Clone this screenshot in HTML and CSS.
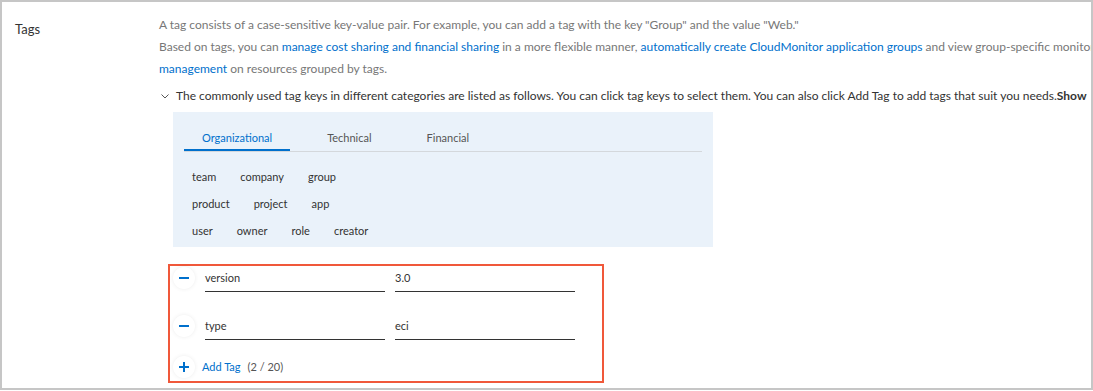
FILE: index.html
```html
<!DOCTYPE html>
<html lang="en">
<head>
    <meta charset="UTF-8">
    <title>Tags</title>
    <link rel="stylesheet" href="styles.css">
</head>
<body>
    <div class="frame">
        <div class="form-row">
            <div class="form-label">Tags</div>
            <div class="form-content">
                <p class="desc">A tag consists of a case-sensitive key-value pair. For example, you can add a tag with the key "Group" and the value "Web."</p>
                <p class="desc">Based on tags, you can <a href="#">manage cost sharing and financial sharing</a> in a more flexible manner, <a href="#">automatically create CloudMonitor application groups</a> and view group-specific monitoring</p>
                <p class="desc"><a href="#">management</a> on resources grouped by tags.</p>

                <div class="toggle">
                    <svg class="chevron" width="8" height="5" viewBox="0 0 8 5"><path d="M0.5 0.5 L4 4 L7.5 0.5" fill="none" stroke="#555" stroke-width="1"/></svg>
                    <span>The commonly used tag keys in different categories are listed as follows. You can click tag keys to select them. You can also click Add Tag to add tags that suit you needs.<b>Show</b></span>
                </div>

                <div class="preset-panel">
                    <div class="tabs">
                        <div class="tab active">Organizational</div>
                        <div class="tab">Technical</div>
                        <div class="tab">Financial</div>
                    </div>
                    <div class="key-row">
                        <span class="key">team</span>
                        <span class="key">company</span>
                        <span class="key">group</span>
                    </div>
                    <div class="key-row">
                        <span class="key">product</span>
                        <span class="key">project</span>
                        <span class="key">app</span>
                    </div>
                    <div class="key-row">
                        <span class="key">user</span>
                        <span class="key">owner</span>
                        <span class="key">role</span>
                        <span class="key">creator</span>
                    </div>
                </div>

                <div class="tag-editor">
                    <div class="tag-line">
                        <span class="round-btn minus"></span>
                        <div class="field">version</div>
                        <div class="field">3.0</div>
                    </div>
                    <div class="tag-line">
                        <span class="round-btn minus"></span>
                        <div class="field">type</div>
                        <div class="field">eci</div>
                    </div>
                    <div class="add-line">
                        <span class="round-btn plus"></span>
                        <a href="#" class="add-link">Add Tag</a>
                        <span class="count">(2 / 20)</span>
                    </div>
                </div>
            </div>
        </div>
    </div>
</body>
</html>
```

FILE: styles.css
```css
* {
    margin: 0;
    padding: 0;
    box-sizing: border-box;
}

body {
    font-family: 'Lato', 'Noto Sans', sans-serif;
    font-size: 12px;
    color: #333;
    background: #fff;
}

a {
    color: #0070cc;
    text-decoration: none;
}

/* Рамка */
.frame {
    width: 1093px;
    height: 390px;
    border: 2px solid #c6c6c6;
    overflow: hidden;
    padding-top: 12px;
}

.form-row {
    display: flex;
}

.form-label {
    width: 157px;
    flex-shrink: 0;
    padding-left: 13px;
    font-size: 13px;
    line-height: 30px;
    color: #333;
}

.form-content {
    flex: 1;
    min-width: 0;
}

/* Опис */
.desc {
    line-height: 22px;
    color: #777;
    white-space: nowrap;
}

.toggle {
    display: flex;
    align-items: center;
    margin-top: 5px;
    line-height: 22px;
    white-space: nowrap;
    color: #333;
}

.chevron {
    flex-shrink: 0;
    margin: 0 7px 0 2px;
}

/* Панель з ключами */
.preset-panel {
    width: 540px;
    height: 135px;
    margin: 5px 0 0 14px;
    padding: 0 11px;
    background: #eaf2fa;
    font-size: 11px;
}

.tabs {
    display: flex;
    gap: 19px;
    padding-top: 15px;
    border-bottom: 1px solid #d4d8dc;
    margin-bottom: 14px;
}

.tab {
    padding: 0 18px;
    line-height: 22px;
    height: 24px;
    color: #555;
}

.tab.active {
    color: #0070cc;
    border-bottom: 2px solid #0070cc;
    margin-bottom: -1px;
}

.key-row {
    display: flex;
    gap: 8px;
    height: 27px;
    line-height: 22px;
}

.key {
    padding: 0 8px;
    color: #333;
}

/* Редактор тегів */
.tag-editor {
    width: 436px;
    height: 119px;
    margin: 17px 0 0 9px;
    border: 2px solid #f0583a;
    padding: 0 0 0 3px;
    font-size: 11px;
}

.tag-line {
    display: flex;
    align-items: flex-start;
    margin-bottom: 22px;
}

.round-btn {
    position: relative;
    width: 22px;
    height: 22px;
    margin-top: 1px;
    border-radius: 50%;
    background: #fff;
    box-shadow: 0 0 4px rgba(0, 0, 0, 0.08);
    flex-shrink: 0;
}

.round-btn::before,
.round-btn::after {
    content: "";
    position: absolute;
    left: 6px;
    top: 10px;
    width: 10px;
    height: 2px;
    background: #0070cc;
}

.round-btn.minus::after {
    display: none;
}

.round-btn.plus::after {
    left: 10px;
    top: 6px;
    width: 2px;
    height: 10px;
}

.field {
    width: 180px;
    height: 26px;
    line-height: 24px;
    border-bottom: 1px solid #333;
    color: #333;
    margin-left: 10px;
}

.add-line {
    display: flex;
    align-items: center;
    height: 24px;
    margin-top: -8px;
}

.add-link {
    margin-left: 7px;
}

.count {
    margin-left: 7px;
    color: #555;
}
```
